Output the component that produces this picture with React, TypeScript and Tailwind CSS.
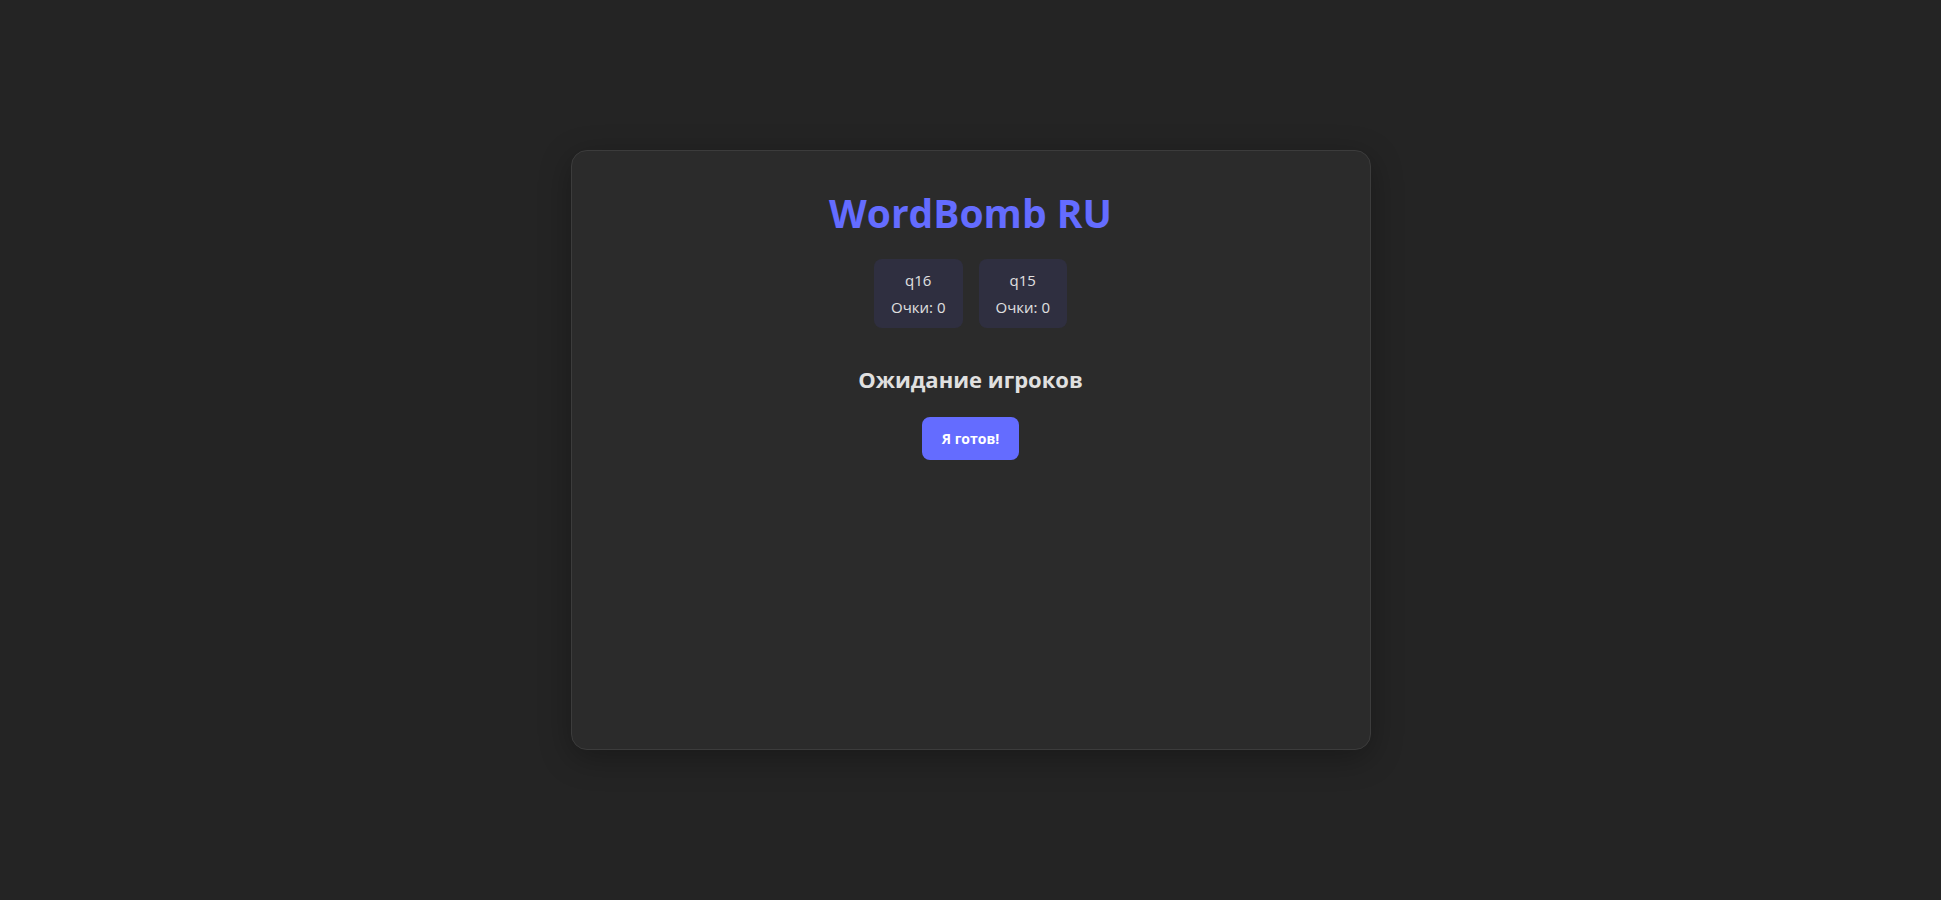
export default function App() {
  const players = [
    { name: 'q16', score: 0 },
    { name: 'q15', score: 0 },
  ];

  return (
    <div
      className="min-h-screen bg-[#242424] flex items-center justify-center text-[#e0e0e0]"
      style={{ fontFamily: '"Open Sans", "Noto Sans", sans-serif' }}
    >
      <div className="w-[800px] h-[600px] bg-[#2b2b2b] border border-[#3c3c3c] rounded-2xl shadow-[0_8px_32px_rgba(0,0,0,0.3)] px-8 pt-[38px] flex flex-col items-center">
        <h1 className="text-[39px] leading-[48px] font-bold text-[#646cff]">WordBomb RU</h1>

        <div className="flex gap-4 mt-[22px]">
          {players.map((p) => (
            <div
              key={p.name}
              className="bg-[#2f2f40] rounded-lg px-[17px] py-[9px] flex flex-col items-center gap-[3px] text-[15px] leading-6"
            >
              <span>{p.name}</span>
              <span>Очки: {p.score}</span>
            </div>
          ))}
        </div>

        <h2 className="mt-[35px] text-[22px] leading-8 font-bold">Ожидание игроков</h2>

        <button className="mt-[22px] bg-[#646cff] text-white font-bold text-[14px] leading-[21px] px-5 py-[11px] rounded-lg">
          Я готов!
        </button>
      </div>
    </div>
  );
}
